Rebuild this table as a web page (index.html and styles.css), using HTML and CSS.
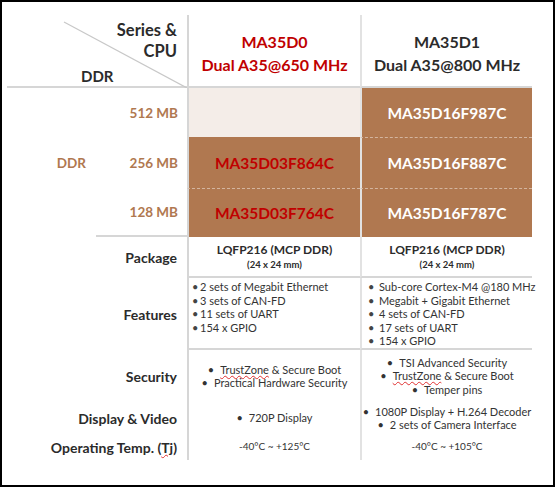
FILE: index.html
```html
<!DOCTYPE html>
<html lang="en">
<head>
  <meta charset="UTF-8">
  <title>MA35D series</title>
  <link rel="stylesheet" href="styles.css">
</head>
<body>
  <div class="frame">
    <div class="spec">
      <div class="corner">
        <svg class="diag" width="180" height="73" viewBox="0 0 180 73">
          <line x1="57" y1="7" x2="180" y2="73" stroke="#c8c8c8" stroke-width="1.2"/>
        </svg>
        <div class="corner-top">Series &amp;<br>CPU</div>
        <div class="corner-ddr">DDR</div>
      </div>
      <div class="head col-a red">MA35D0<br>Dual A35@650 MHz</div>
      <div class="head col-b">MA35D1<br>Dual A35@800 MHz</div>

      <div class="ddr-label">DDR</div>
      <div class="size">512 MB</div>
      <div class="part col-a empty"></div>
      <div class="part col-b">MA35D16F987C</div>

      <div class="size">256 MB</div>
      <div class="part col-a red">MA35D03F864C</div>
      <div class="part col-b dash">MA35D16F887C</div>

      <div class="size last">128 MB</div>
      <div class="part col-a red dash">MA35D03F764C</div>
      <div class="part col-b dash">MA35D16F787C</div>

      <div class="label">Package</div>
      <div class="cell col-a pkg ruled">LQFP216 (MCP DDR)<small>(24 x 24 mm)</small></div>
      <div class="cell col-b pkg ruled">LQFP216 (MCP DDR)<small>(24 x 24 mm)</small></div>

      <div class="label">Features</div>
      <div class="cell col-a top ruled">
        <ul class="list list-a">
          <li>2 sets of Megabit Ethernet</li>
          <li>3 sets of CAN-FD</li>
          <li>11 sets of UART</li>
          <li>154 x GPIO</li>
        </ul>
      </div>
      <div class="cell col-b top ruled">
        <ul class="list list-b">
          <li>Sub-core Cortex-M4 @180 MHz</li>
          <li>Megabit + Gigabit Ethernet</li>
          <li>4 sets of CAN-FD</li>
          <li>17 sets of UART</li>
          <li>154 x GPIO</li>
        </ul>
      </div>

      <div class="label">Security</div>
      <div class="cell col-a">
        <p class="dot"><span class="typo">TrustZone</span> &amp; Secure Boot</p>
        <p class="dot">Practical Hardware Security</p>
      </div>
      <div class="cell col-b">
        <p class="dot">TSI Advanced Security</p>
        <p class="dot"><span class="typo">TrustZone</span> &amp; Secure Boot</p>
        <p class="dot">Temper pins</p>
      </div>

      <div class="label">Display &amp; Video</div>
      <div class="cell col-a">
        <p class="dot">720P Display</p>
      </div>
      <div class="cell col-b">
        <p class="dot">1080P Display + H.264 Decoder</p>
        <p class="dot">2 sets of Camera Interface</p>
      </div>

      <div class="label">Operating Temp. (<span class="typo">Tj</span>)</div>
      <div class="cell col-a temp">-40°C ~ +125°C</div>
      <div class="cell col-b temp">-40°C ~ +105°C</div>
    </div>
  </div>
</body>
</html>
```

FILE: styles.css
```css
* {
  margin: 0;
  padding: 0;
  box-sizing: border-box;
}
body {
  font-family: 'Lato', 'Liberation Sans', sans-serif;
  background: #fff;
  color: #2b2b2b;
}
.frame {
  width: 555px;
  height: 487px;
  border: 2px solid #000;
  padding-top: 13px;
}
.spec {
  display: grid;
  grid-template-columns: 94px 91px 173px 172px;
  grid-template-rows: 73px 49px 51px 49px 41px 72px 52px 32px 26px;
}
.corner {
  grid-column: 1 / 3;
  margin-left: 5px;
  position: relative;
  border-bottom: 2px solid #d6d6d6;
  font-weight: 700;
  font-size: 15px;
  line-height: 21px;
}
.diag {
  position: absolute;
  left: 0;
  top: 0;
}
.corner-top {
  text-align: right;
  padding: 5px 10px 0 0;
  font-size: 16.5px;
}
.corner-ddr {
  padding: 4px 0 0 74px;
}
.col-a, .col-b {
  border-left: 2px solid #d6d6d6;
}
.col-b {
  border-left-color: #e2e2e2;
}
.head {
  display: flex;
  align-items: center;
  justify-content: center;
  text-align: center;
  font-weight: 700;
  font-size: 16px;
  line-height: 23px;
  padding-top: 5px;
  border-bottom: 2px solid #d6d6d6;
}
.red {
  color: #c00000;
}
.ddr-label {
  grid-row: 2 / 5;
  display: flex;
  align-items: center;
  justify-content: flex-end;
  padding-right: 10px;
  color: #b07850;
  font-weight: 700;
  font-size: 13.5px;
}
.size {
  display: flex;
  align-items: center;
  justify-content: flex-end;
  padding-right: 9px;
  color: #b07850;
  font-weight: 700;
  font-size: 13.5px;
}
.size.last {
  border-bottom: 2px solid #d6d6d6;
}
.part {
  display: flex;
  align-items: center;
  justify-content: center;
  background: #b07850;
  color: #fff;
  font-weight: 700;
  font-size: 15.5px;
}
.part.red {
  color: #c00000;
}
.part.empty {
  background: #f4ede8;
}
.part.dash {
  border-top: 1px dashed rgba(255, 255, 255, 0.45);
}
.label {
  grid-column: 1 / 3;
  display: flex;
  align-items: center;
  justify-content: flex-end;
  padding-right: 10px;
  font-weight: 700;
  font-size: 14px;
  white-space: nowrap;
}
.cell {
  display: flex;
  flex-direction: column;
  align-items: center;
  justify-content: center;
  font-size: 11px;
  line-height: 13.5px;
  color: #333;
  text-align: center;
  white-space: nowrap;
}
.cell.ruled {
  border-bottom: 2px solid #d6d6d6;
}
.cell.top {
  justify-content: flex-start;
  align-items: stretch;
  padding-top: 2px;
}
.pkg {
  font-weight: 700;
  font-size: 12px;
  line-height: 16px;
  color: #2b2b2b;
}
.pkg small {
  display: block;
  font-size: 9.5px;
  line-height: 13px;
}
.list {
  list-style: none;
  text-align: left;
}
.list li::before {
  content: "\2022";
  display: inline-block;
  color: #444;
}
.list-a {
  padding-left: 3px;
}
.list-a li::before {
  width: 8px;
}
.list-b {
  padding-left: 6px;
}
.list-b li::before {
  width: 11px;
}
.dot::before {
  content: "\2022";
  margin-right: 6px;
}
.typo {
  text-decoration: underline wavy #e03030;
  text-decoration-thickness: 1px;
}
.temp {
  font-size: 10px;
}
```
